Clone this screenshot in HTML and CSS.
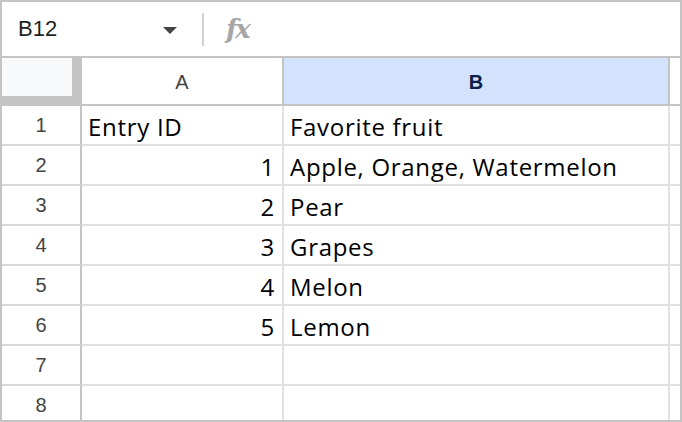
FILE: index.html
```html
<!DOCTYPE html>
<html lang="en">
<head>
  <meta charset="UTF-8" />
  <title>Sheet</title>
  <link rel="stylesheet" href="styles.css">
</head>
<body>
  <div class="sheet">
    <div class="formula-bar">
      <div class="name-box">B12</div>
      <svg class="caret" width="14" height="7" viewBox="0 0 14 7"><path d="M0 0 L14 0 L7 7 Z" fill="#444"/></svg>
      <div class="divider"></div>
      <div class="fx">fx</div>
    </div>

    <div class="grid">
      <div class="corner"><div class="corner-inner"></div></div>
      <div class="col-head">A</div>
      <div class="col-head selected">B</div>
      <div class="col-head last"></div>

      <div class="row-head">1</div>
      <div class="cell">Entry ID</div>
      <div class="cell">Favorite fruit</div>
      <div class="cell last"></div>

      <div class="row-head">2</div>
      <div class="cell num">1</div>
      <div class="cell">Apple, Orange, Watermelon</div>
      <div class="cell last"></div>

      <div class="row-head">3</div>
      <div class="cell num">2</div>
      <div class="cell">Pear</div>
      <div class="cell last"></div>

      <div class="row-head">4</div>
      <div class="cell num">3</div>
      <div class="cell">Grapes</div>
      <div class="cell last"></div>

      <div class="row-head">5</div>
      <div class="cell num">4</div>
      <div class="cell">Melon</div>
      <div class="cell last"></div>

      <div class="row-head">6</div>
      <div class="cell num">5</div>
      <div class="cell">Lemon</div>
      <div class="cell last"></div>

      <div class="row-head">7</div>
      <div class="cell"></div>
      <div class="cell"></div>
      <div class="cell last"></div>

      <div class="row-head">8</div>
      <div class="cell"></div>
      <div class="cell"></div>
      <div class="cell last"></div>
    </div>
  </div>
</body>
</html>
```

FILE: styles.css
```css
body {
  margin: 0;
  background: #fff;
  font-family: "Liberation Sans", Arial, sans-serif;
}
.sheet {
  width: 682px;
  height: 422px;
  box-sizing: border-box;
  border: 2px solid #c4c4c4;
  overflow: hidden;
  background: #fff;
}
/* formula bar */
.formula-bar {
  height: 54px;
  border-bottom: 2px solid #c4c4c4;
  display: flex;
  align-items: center;
}
.name-box {
  font-size: 22px;
  color: #1f1f1f;
  margin-left: 16px;
  width: 145px;
}
.caret {
  margin-top: 2px;
}
.divider {
  width: 2px;
  height: 33px;
  background: #d0d0d0;
  margin-left: 25px;
}
.fx {
  font-family: "DejaVu Serif", "Liberation Serif", serif;
  font-style: italic;
  font-weight: bold;
  font-size: 26px;
  color: #a6a6a6;
  margin-left: 22px;
  margin-top: -1px;
  letter-spacing: -2px;
}
/* grid */
.grid {
  display: grid;
  grid-template-columns: 80px 202px 386px 10px;
  grid-template-rows: 48px repeat(8, 40px);
}
.corner {
  background: #c4c4c4;
  border-bottom: 2px solid #c4c4c4;
}
.corner-inner {
  width: 70px;
  height: 38px;
  background: #f8f9fa;
}
.col-head {
  border-right: 2px solid #c4c4c4;
  border-bottom: 2px solid #c4c4c4;
  display: flex;
  align-items: center;
  justify-content: center;
  font-size: 20px;
  color: #444;
  padding-top: 2px;
}
.col-head.selected {
  background: #d3e3fd;
  color: #0b1f4a;
  font-weight: bold;
}
.col-head.last {
  border-right: none;
}
.row-head {
  border-right: 2px solid #c4c4c4;
  border-bottom: 2px solid #d8d8d8;
  display: flex;
  align-items: center;
  justify-content: center;
  font-size: 20px;
  color: #444;
}
.cell {
  border-right: 2px solid #e1e1e1;
  border-bottom: 2px solid #e1e1e1;
  display: flex;
  align-items: center;
  padding: 2px 7px 0 6px;
  font-family: "Open Sans", "Lato", sans-serif;
  font-size: 24px;
  letter-spacing: 0.7px;
  color: #000;
  white-space: nowrap;
}
.cell.num {
  justify-content: flex-end;
}
.cell.last {
  border-right: none;
  padding: 0;
}
```
